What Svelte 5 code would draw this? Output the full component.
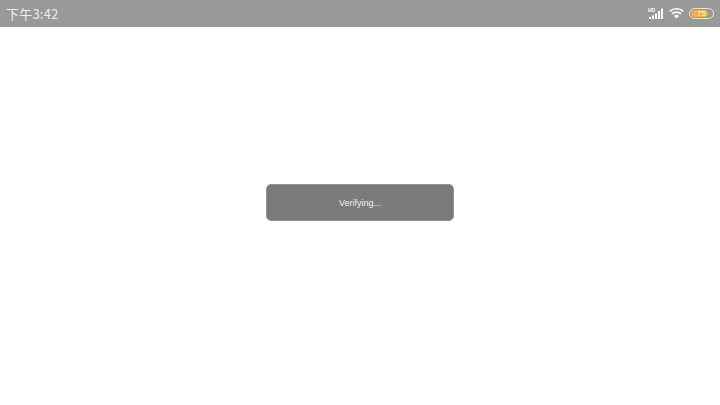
<script>
	let time = "下午3:42"
	let message = "Verifying..."
	let battery = 75
</script>

<div class="page">
	<header class="statusbar">
		<span class="time">{time}</span>
		<div class="icons">
			<svg class="signal" width="16" height="13" viewBox="0 0 16 13">
				<text x="0" y="4.5" class="hd">HD</text>
				<rect x="1" y="10" width="2" height="2" fill="#fff" />
				<rect x="4" y="8.5" width="2" height="3.5" fill="#fff" />
				<rect x="7" y="6.5" width="2" height="5.5" fill="#fff" />
				<rect x="10" y="4" width="2" height="8" fill="#fff" />
				<rect x="13" y="1.5" width="2" height="10.5" fill="#fff" />
			</svg>
			<svg class="wifi" width="15" height="12" viewBox="0 0 15 12">
				<path d="M0.8 4.4 A9.8 9.8 0 0 1 14.2 4.4" fill="none" stroke="#fff" stroke-width="1.7" />
				<path d="M3 6.8 A6.6 6.6 0 0 1 12 6.8" fill="none" stroke="#fff" stroke-width="1.7" />
				<path d="M5 9 A3.6 3.6 0 0 1 10 9 L7.5 11.5 Z" fill="#fff" />
			</svg>
			<div class="battery">
				<div class="level" style:width="{battery}%"></div>
				<span>{battery}</span>
			</div>
		</div>
	</header>
	<main class="content">
		<div class="toast">{message}</div>
	</main>
</div>

<style>
	:global(body) {
		margin:0;
		background:#fff;
	}
	.page {
		width:720px;
		height:405px;
		display:flex;
		flex-direction:column;
		overflow:hidden;
	}
	.statusbar {
		height:27px;
		background:#999;
		display:flex;
		justify-content:space-between;
		align-items:center;
		padding:0 6px;
		box-sizing:border-box;
		flex-shrink:0;
	}
	.time {
		font-family:"Noto Sans CJK SC","Liberation Sans",sans-serif;
		font-size:13px;
		letter-spacing:0.2px;
		color:#eee;
	}
	.icons {
		display:flex;
		align-items:center;
		gap:5px;
		margin-top:-1px;
	}
	.hd {
		font-family:"Liberation Sans",sans-serif;
		font-size:5px;
		font-weight:bold;
		fill:#fff;
	}
	.signal, .wifi {
		display:block;
	}
	.battery {
		position:relative;
		width:23px;
		height:9px;
		border:1px solid #f2e6c8;
		border-radius:6px;
		overflow:hidden;
		display:flex;
		align-items:center;
		justify-content:center;
	}
	.level {
		position:absolute;
		left:1px;
		top:1px;
		bottom:1px;
		background:#eab04a;
		border-radius:4px;
	}
	.battery span {
		position:relative;
		font-family:"Liberation Sans",sans-serif;
		font-size:8px;
		color:#fff;
	}
	.content {
		flex:1;
		display:flex;
		justify-content:center;
		padding-top:157px;
		box-sizing:border-box;
	}
	.toast {
		width:188px;
		height:37px;
		background:#7b7b7b;
		border:1px solid #939393;
		border-radius:5px;
		color:#f0f0f0;
		font-family:"Liberation Sans",sans-serif;
		font-size:9px;
		display:flex;
		align-items:center;
		justify-content:center;
		box-sizing:border-box;
	}
</style>
